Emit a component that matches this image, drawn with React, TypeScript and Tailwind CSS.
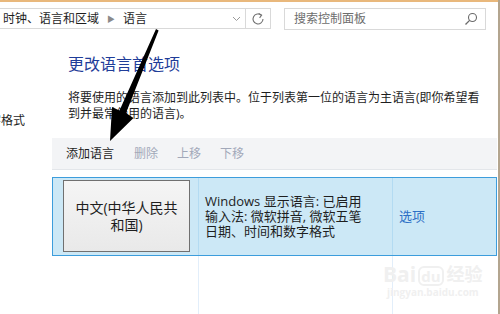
import React from "react";

const Chevron = () => (
  <svg width="9" height="6" viewBox="0 0 9 6" className="text-[#9a9a9a]">
    <polyline points="1,1 4.5,4.5 8,1" fill="none" stroke="currentColor" strokeWidth="1" />
  </svg>
);

const RefreshIcon = () => (
  <svg width="14" height="14" viewBox="0 0 14 14" className="text-[#707070]">
    <path d="M10.3 3.2 A5 5 0 1 0 12 7" fill="none" stroke="currentColor" strokeWidth="1.1" />
    <polyline points="7.6,1.4 10.6,3.2 8.6,5.8" fill="none" stroke="currentColor" strokeWidth="1.1" />
  </svg>
);

const SearchIcon = () => (
  <svg width="14" height="14" viewBox="0 0 14 14" className="text-[#6a6a6a]">
    <circle cx="8.5" cy="5.5" r="4" fill="none" stroke="currentColor" strokeWidth="1.1" />
    <line x1="5.6" y1="8.4" x2="1.5" y2="12.5" stroke="currentColor" strokeWidth="1.3" />
  </svg>
);

// the big black pointer drawn over the screenshot
const PointerArrow = () => (
  <svg width="500" height="314" className="absolute left-0 top-0 pointer-events-none">
    <polygon
      points="156,29 158.6,30.6 126,113 133.5,118 110,141 112,107 119.5,110.5"
      fill="#000"
    />
  </svg>
);

const App = () => {
  return (
    <div className="relative w-[500px] h-[314px] overflow-hidden bg-white border-r-2 border-[#b3a58f] text-[#1e1e1e] font-['Open_Sans','Noto_Sans_CJK_SC',sans-serif]">
      {/* window frame */}
      <div className="h-[2px] bg-[#e9b87c]" />

      {/* address / search bar */}
      <div className="flex items-start h-[34px] pt-[6px]">
        <div className="-ml-px flex items-center w-[247px] h-[21px] border border-[#d9d9d9] pl-[3px] pr-[4px] text-[12px] leading-[16px]">
          <span>时钟、语言和区域</span>
          <span className="mx-[8px] text-[8px] text-[#8a8a8a]">▶</span>
          <span>语言</span>
          <span className="ml-auto">
            <Chevron />
          </span>
        </div>
        <div className="flex items-center justify-center w-[25px] h-[21px] border border-l-0 border-[#d9d9d9]">
          <RefreshIcon />
        </div>
        <div className="ml-[13px] flex items-center w-[202px] h-[22px] border border-[#d9d9d9] pl-[9px] pr-[7px] text-[12px] text-[#6d6d6d]">
          <span>搜索控制面板</span>
          <span className="ml-auto">
            <SearchIcon />
          </span>
        </div>
      </div>

      <div className="flex h-[278px]">
        {/* left navigation, cut off by the screenshot */}
        <div className="w-[52px] shrink-0">
          <div className="mt-[77px] w-[25px] overflow-hidden flex justify-end">
            <span className="shrink-0 whitespace-nowrap text-[12px] leading-[16px]">时间和数字格式</span>
          </div>
        </div>

        {/* main content */}
        <div className="flex-1 flex flex-col pr-px">
          <h1 className="mt-[18px] pl-[16px] text-[16px] leading-[20px] font-normal text-[#1f3d99]">
            更改语言首选项
          </h1>
          <p className="mt-[16px] pl-[16px] text-[12px] leading-[16px] whitespace-nowrap">
            将要使用的语言添加到此列表中。位于列表第一位的语言为主语言(即你希望看
            <br />
            到并最常使用的语言)。
          </p>

          {/* toolbar */}
          <div className="mt-[16px] flex items-center h-[32px] pl-[14px] bg-[#f3f4f6] border-b border-[#e3e6ea] text-[12px]">
            <span className="text-[#1e1e1e]">添加语言</span>
            <span className="ml-[20px] text-[#a2a8b9]">删除</span>
            <span className="ml-[19px] text-[#a2a8b9]">上移</span>
            <span className="ml-[19px] text-[#a2a8b9]">下移</span>
          </div>

          {/* selected language row */}
          <div className="mt-[7px] flex h-[79px] border border-[#3c9ddc] bg-[#cce8f6]">
            <div className="w-[145px] shrink-0 pl-[10px] pt-[2px] pb-[3px]">
              <div className="flex flex-col items-center justify-center w-[127px] h-full border border-[#707070] bg-gradient-to-b from-[#f5f5f5] to-[#e9e9e9] text-[14px] leading-[17px]">
                <span>中文(中华人民共</span>
                <span>和国)</span>
              </div>
            </div>
            <div className="w-[194px] shrink-0 flex flex-col justify-center border-l border-[#b3dbf2] pl-[6px] text-[13px] leading-[15px] whitespace-nowrap">
              <span>Windows 显示语言: 已启用</span>
              <span>输入法: 微软拼音, 微软五笔</span>
              <span>日期、时间和数字格式</span>
            </div>
            <div className="flex-1 flex items-center border-l border-[#b3dbf2] pl-[6px] text-[13px] text-[#2d6fc5]">
              选项
            </div>
          </div>

          {/* empty list area */}
          <div className="flex flex-1">
            <div className="w-[146px] shrink-0" />
            <div className="w-[194px] shrink-0 border-l border-[#e2eefa]" />
            <div className="flex-1 border-l border-[#e2eefa]" />
          </div>
        </div>
      </div>

      {/* site watermark */}
      <div className="absolute left-[383px] top-[262px] flex flex-col items-center text-[#f0f0f0] pointer-events-none">
        <div className="flex items-end text-[21px] leading-[24px] font-bold">
          <span>Bai</span>
          <span className="ml-[2px] rounded-[6px] border-2 border-[#f0f0f0] px-[1px] text-[15px] leading-[16px]">du</span>
          <span className="ml-[3px] text-[18px]">经验</span>
        </div>
        <span className="text-[10px] leading-[12px] font-bold">jingyan.baidu.com</span>
      </div>

      <PointerArrow />
    </div>
  );
};

export default App;
